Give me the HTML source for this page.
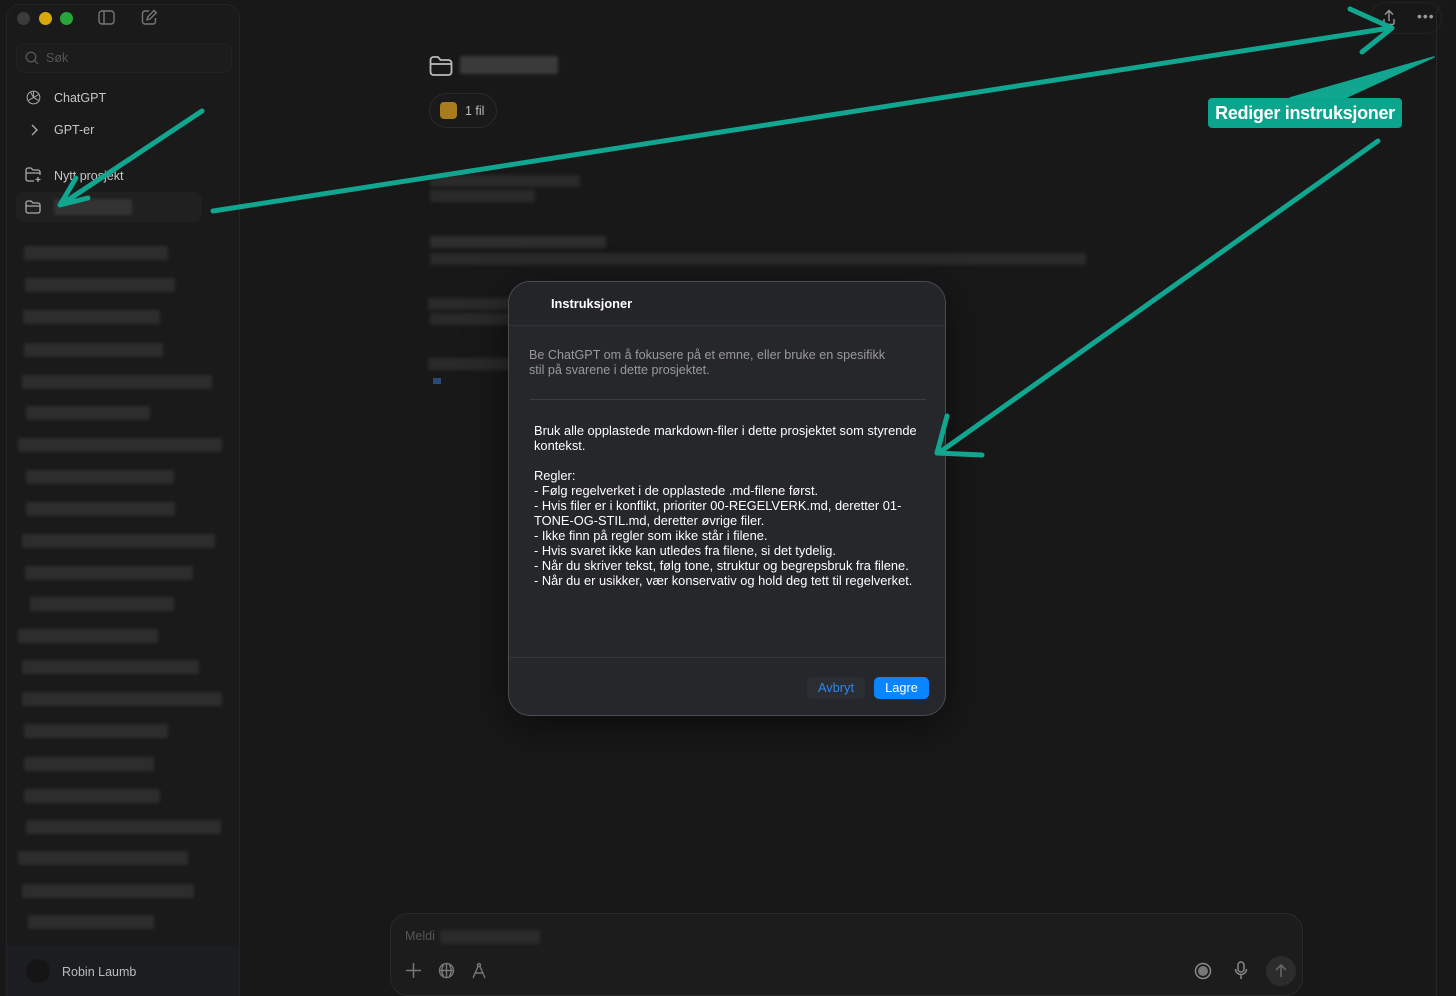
<!DOCTYPE html>
<html><head><meta charset="utf-8">
<style>
*{margin:0;padding:0;box-sizing:border-box}
body{width:1456px;height:996px;background:#181818;font-family:"Liberation Sans",sans-serif;position:relative;overflow:hidden;color:#ddd}
.abs{position:absolute}
.sb{left:6px;top:4px;width:234px;height:992px;background:#1a1a1a;border:1px solid #242424;border-radius:14px 14px 0 0}
.bl{position:absolute;height:14px;background:#2d2d2d;filter:blur(1.6px);border-radius:2px}
.bl2{position:absolute;height:12px;background:#2a2a2a;filter:blur(1.8px)}
.t{position:absolute;font-size:12.5px;color:#c8c8c8;white-space:nowrap}
.modal{left:508px;top:281px;width:438px;height:435px;background:#25272a;border:1px solid #4a4c50;border-radius:22px;box-shadow:0 10px 40px rgba(0,0,0,.5)}
</style></head><body>
<div class="abs sb"></div>
<div class="abs" style="left:17px;top:12px;width:13px;height:13px;border-radius:50%;background:#3b3b3b"></div>
<div class="abs" style="left:39px;top:12px;width:13px;height:13px;border-radius:50%;background:#d8a80c"></div>
<div class="abs" style="left:60px;top:12px;width:13px;height:13px;border-radius:50%;background:#27a53b"></div>
<svg class="abs" style="left:98px;top:10px" width="18" height="16" viewBox="0 0 18 16" fill="none" stroke="#777" stroke-width="1.4"><rect x="1" y="1" width="15" height="13" rx="3"/><line x1="6" y1="1" x2="6" y2="14"/></svg>
<svg class="abs" style="left:141px;top:9px" width="17" height="17" viewBox="0 0 17 17" fill="none" stroke="#777" stroke-width="1.4"><path d="M8 2H4a2.5 2.5 0 0 0-2.5 2.5v8A2.5 2.5 0 0 0 4 15h8a2.5 2.5 0 0 0 2.5-2.5V9"/><path d="M13 1.5l2.3 2.3L9 10l-3 .8.8-3z"/></svg>
<div class="abs" style="left:16px;top:43px;width:216px;height:30px;border-radius:8px;background:#1c1c1c;border:1px solid #222"></div>
<svg class="abs" style="left:25px;top:51px" width="14" height="14" viewBox="0 0 14 14" fill="none" stroke="#555" stroke-width="1.3"><circle cx="6" cy="6" r="4.8"/><line x1="9.5" y1="9.5" x2="13" y2="13"/></svg>
<div class="t" style="left:46px;top:51px;color:#555">Søk</div>
<svg class="abs" style="left:25px;top:89px" width="17" height="17" viewBox="0 0 24 24" fill="none" stroke="#aaa" stroke-width="1.4"><circle cx="12" cy="12" r="9"/><path d="M12 3v9l7 4M12 12l-7 4M12 12l-4-7.5M12 12l7-4"/></svg>
<div class="t" style="left:54px;top:91px">ChatGPT</div>
<svg class="abs" style="left:30px;top:124px" width="8" height="12" viewBox="0 0 8 12" fill="none" stroke="#aaa" stroke-width="1.4"><path d="M2 1l5 5-5 5"/></svg>
<div class="t" style="left:54px;top:123px">GPT-er</div>
<svg class="abs" style="left:25px;top:167px" width="17" height="16" viewBox="0 0 17 16" fill="none" stroke="#aaa" stroke-width="1.3"><path d="M9 14H3a2 2 0 0 1-2-2V3a2 2 0 0 1 2-2h3l2 2h5a2 2 0 0 1 2 2v3M1 6h14M13 10v5M10.5 12.5h5"/></svg>
<div class="t" style="left:54px;top:169px">Nytt prosjekt</div>
<div class="abs" style="left:16px;top:192px;width:186px;height:30px;border-radius:8px;background:#202020"></div>
<svg class="abs" style="left:25px;top:200px" width="16" height="14" viewBox="0 0 16 14" fill="none" stroke="#aaa" stroke-width="1.3"><path d="M1 3a2 2 0 0 1 2-2h3l2 2h5a2 2 0 0 1 2 2v6a2 2 0 0 1-2 2H3a2 2 0 0 1-2-2zM1 6h14"/></svg>
<div class="bl" style="left:54px;top:199px;width:78px;height:16px;background:#333"></div>
<div class="bl" style="left:24px;top:246px;width:144px"></div>
<div class="bl" style="left:25px;top:278px;width:150px"></div>
<div class="bl" style="left:23px;top:310px;width:137px"></div>
<div class="bl" style="left:24px;top:343px;width:139px"></div>
<div class="bl" style="left:22px;top:375px;width:190px"></div>
<div class="bl" style="left:26px;top:406px;width:124px"></div>
<div class="bl" style="left:18px;top:438px;width:204px"></div>
<div class="bl" style="left:26px;top:470px;width:148px"></div>
<div class="bl" style="left:26px;top:502px;width:149px"></div>
<div class="bl" style="left:22px;top:534px;width:193px"></div>
<div class="bl" style="left:25px;top:566px;width:168px"></div>
<div class="bl" style="left:30px;top:597px;width:144px"></div>
<div class="bl" style="left:18px;top:629px;width:140px"></div>
<div class="bl" style="left:22px;top:660px;width:177px"></div>
<div class="bl" style="left:22px;top:692px;width:200px"></div>
<div class="bl" style="left:24px;top:724px;width:144px"></div>
<div class="bl" style="left:24px;top:757px;width:130px"></div>
<div class="bl" style="left:24px;top:789px;width:136px"></div>
<div class="bl" style="left:26px;top:820px;width:195px"></div>
<div class="bl" style="left:18px;top:851px;width:170px"></div>
<div class="bl" style="left:22px;top:884px;width:172px"></div>
<div class="bl" style="left:28px;top:915px;width:126px"></div>
<div class="abs" style="left:7px;top:946px;width:232px;height:50px;background:#1b1d20"></div>
<div class="abs" style="left:26px;top:959px;width:24px;height:24px;border-radius:50%;background:#151515"></div>
<div class="t" style="left:62px;top:965px;color:#bbb">Robin Laumb</div>
<svg class="abs" style="left:429px;top:55px" width="24" height="22" viewBox="0 0 24 22" fill="none" stroke="#bbb" stroke-width="1.8"><path d="M1.5 5a3 3 0 0 1 3-3h4.5l2.5 3h8a3 3 0 0 1 3 3v9a3 3 0 0 1-3 3h-15a3 3 0 0 1-3-3zM1.5 9h21"/></svg>
<div class="bl" style="left:460px;top:56px;width:98px;height:18px;background:#3a3a3a"></div>
<div class="abs" style="left:429px;top:93px;width:68px;height:35px;border-radius:18px;border:1px solid #2a2a2a;background:#1a1a1a"></div>
<div class="abs" style="left:440px;top:102px;width:17px;height:17px;border-radius:4px;background:#a67c1f"></div>
<div class="t" style="left:465px;top:104px;color:#bbb">1 fil</div>
<div class="bl2" style="left:430px;top:175px;width:150px"></div>
<div class="bl2" style="left:430px;top:190px;width:105px"></div>
<div class="bl2" style="left:430px;top:236px;width:176px;background:#2e2e2e"></div>
<div class="bl2" style="left:430px;top:253px;width:656px"></div>
<div class="bl2" style="left:428px;top:298px;width:90px"></div>
<div class="bl2" style="left:430px;top:313px;width:80px"></div>
<div class="bl2" style="left:428px;top:358px;width:85px"></div>
<div class="abs" style="left:433px;top:378px;width:8px;height:6px;background:#2a4a7a"></div>
<div class="abs" style="left:1370px;top:2px;width:72px;height:32px;border-radius:16px;border:1px solid #232323"></div>
<svg class="abs" style="left:1381px;top:9px" width="16" height="17" viewBox="0 0 16 17" fill="none" stroke="#999" stroke-width="1.4"><path d="M8 12V2M4 5.5L8 1.5l4 4M3 10v4a1.5 1.5 0 0 0 1.5 1.5h7A1.5 1.5 0 0 0 13 14v-4"/></svg>
<div class="t" style="left:1417px;top:8px;color:#999;font-size:14px;letter-spacing:1px">•••</div>
<div class="abs" style="left:1436px;top:0;width:20px;height:996px;border-left:1px solid #262626;border-radius:14px 0 0 0"></div>
<div class="abs" style="left:390px;top:913px;width:913px;height:83px;border-radius:18px;border:1px solid #2a2a2a;background:#1c1c1c"></div>
<div class="t" style="left:405px;top:929px;color:#555">Meldi</div>
<div class="bl" style="left:440px;top:930px;width:100px;background:#2b2b2b"></div>
<svg class="abs" style="left:405px;top:962px" width="17" height="17" viewBox="0 0 17 17" stroke="#777" stroke-width="1.5"><path d="M8.5 1v15M1 8.5h15"/></svg>
<svg class="abs" style="left:438px;top:962px" width="17" height="17" viewBox="0 0 17 17" fill="none" stroke="#777" stroke-width="1.4"><circle cx="8.5" cy="8.5" r="7"/><path d="M1.5 8.5h14M8.5 1.5v14M5.5 3a10 10 0 0 0 0 11M11.5 3a10 10 0 0 1 0 11"/></svg>
<svg class="abs" style="left:471px;top:962px" width="16" height="17" viewBox="0 0 16 17" fill="none" stroke="#777" stroke-width="1.4"><circle cx="8" cy="3" r="1.5"/><path d="M7 4.5L2 16M9 4.5L14 16M3.5 11h9"/></svg>
<svg class="abs" style="left:1194px;top:962px" width="18" height="18" viewBox="0 0 18 18"><circle cx="9" cy="9" r="7.5" fill="none" stroke="#888" stroke-width="1.5"/><circle cx="9" cy="9" r="5" fill="#777"/></svg>
<svg class="abs" style="left:1234px;top:961px" width="14" height="19" viewBox="0 0 14 19" fill="none" stroke="#888" stroke-width="1.5"><rect x="4" y="1" width="6" height="10" rx="3"/><path d="M1.5 8a5.5 5.5 0 0 0 11 0M7 13.5V18"/></svg>
<div class="abs" style="left:1266px;top:956px;width:30px;height:30px;border-radius:50%;background:#2c2c2c"></div>
<svg class="abs" style="left:1273px;top:963px" width="16" height="16" viewBox="0 0 16 16" fill="none" stroke="#666" stroke-width="1.6"><path d="M8 14V2M3 7l5-5 5 5"/></svg>
<div class="abs modal">
  <div style="position:absolute;left:0;top:0;right:0;height:44px;border-bottom:1px solid #31333a;border-radius:22px 22px 0 0;background:#232528"></div>
  <div style="position:absolute;left:42px;top:14px;font-size:12.8px;font-weight:bold;color:#fff">Instruksjoner</div>
  <div style="position:absolute;left:20px;top:66px;font-size:12.6px;line-height:15px;color:#9a9a9a;white-space:nowrap">Be ChatGPT om å fokusere på et emne, eller bruke en spesifikk<br>stil på svarene i dette prosjektet.</div>
  <div style="position:absolute;left:21px;top:117px;width:396px;height:1px;background:#3a3c40"></div>
  <div style="position:absolute;left:25px;top:141px;font-size:12.85px;line-height:15px;color:#fff;white-space:nowrap">Bruk alle opplastede markdown-filer i dette prosjektet som styrende<br>kontekst.<br><br>Regler:<br>- Følg regelverket i de opplastede .md-filene først.<br>- Hvis filer er i konflikt, prioriter 00-REGELVERK.md, deretter 01-<br>TONE-OG-STIL.md, deretter øvrige filer.<br>- Ikke finn på regler som ikke står i filene.<br>- Hvis svaret ikke kan utledes fra filene, si det tydelig.<br>- Når du skriver tekst, følg tone, struktur og begrepsbruk fra filene.<br>- Når du er usikker, vær konservativ og hold deg tett til regelverket.</div>
  <div style="position:absolute;left:0;right:0;top:375px;height:1px;background:#34363a"></div>
  <div style="position:absolute;left:298px;top:395px;width:58px;height:22px;border-radius:5px;background:#2a2d31;color:#2f86f0;font-size:12.8px;text-align:center;line-height:22px">Avbryt</div>
  <div style="position:absolute;left:365px;top:395px;width:55px;height:22px;border-radius:5px;background:#0a84ff;color:#fff;font-size:12.8px;text-align:center;line-height:22px">Lagre</div>
</div>
<svg class="abs" style="left:0;top:0" width="1456" height="996" viewBox="0 0 1456 996" fill="none" stroke="#10a68f" stroke-width="5" stroke-linecap="round" stroke-linejoin="round">
  <path d="M202 111L62 204"/>
  <path d="M76 178L60 205L88 198"/>
  <path d="M213 211L1390 28"/>
  <path d="M1350 9L1392 28L1362 52"/>
  <path d="M1378 141L940 452"/>
  <path d="M947 416L937 453L982 455"/>
  <path d="M1290 98L1434 57L1345 98Z" fill="#10a68f" stroke-width="1.5"/>
</svg>
<div class="abs" style="left:1208px;top:98px;width:194px;height:30px;border-radius:4px;background:#0ba48d;color:#fff;font-size:18px;font-weight:bold;line-height:30px;text-align:center;letter-spacing:-0.3px">Rediger instruksjoner</div>
</body></html>
